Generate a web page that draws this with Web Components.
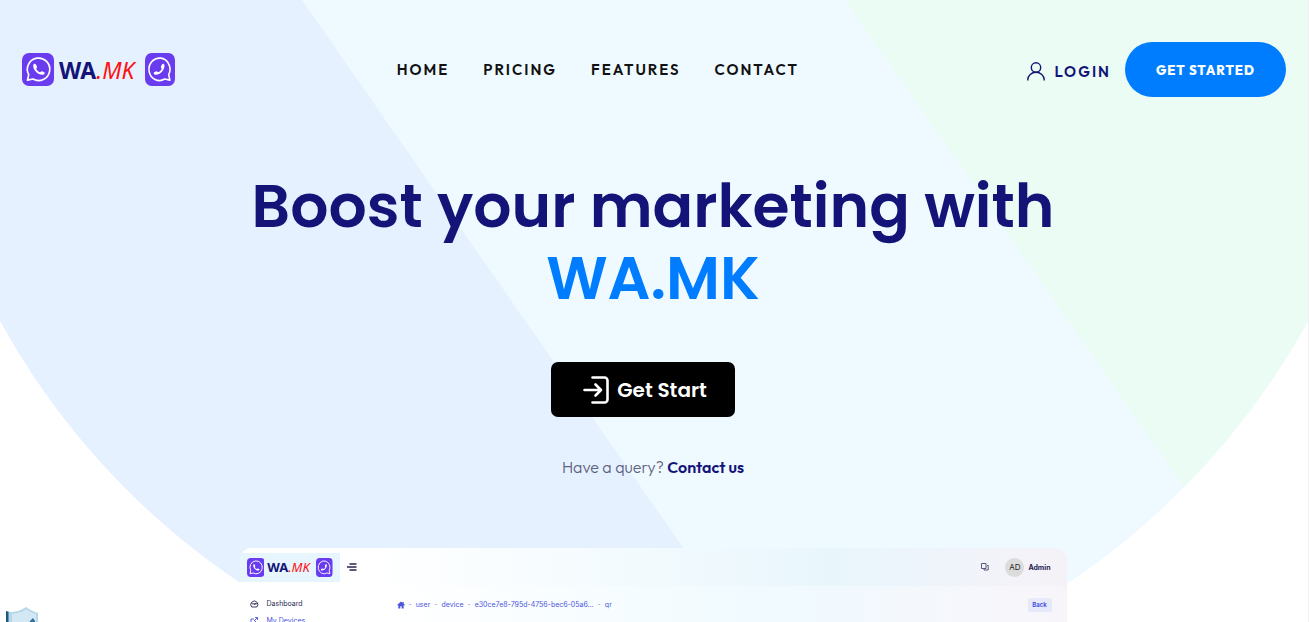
<!DOCTYPE html>
<html lang="en">
<head>
<meta charset="UTF-8">
<meta name="viewport" content="width=device-width, initial-scale=1.0">
<title>WA.MK</title>
<style>
  :root {
    --navy: #141478;
    --blue: #007dff;
    --heading: "Poppins", "Inter", "Liberation Sans", sans-serif;
    --text: "Outfit", "Lato", "Liberation Sans", sans-serif;
  }

  body {
    margin: 0;
    background: #fff;
    font-family: var(--text);
  }
</style>
</head>
<body>
<landing-hero>
  <site-header slot="header"></site-header>
  <hero-intro name="WA.MK">Boost your marketing with</hero-intro>
  <app-preview slot="preview"></app-preview>
</landing-hero>
<shield-badge></shield-badge>

<script>
class ChatIcon extends HTMLElement {
  constructor() {
    super();
    this.attachShadow({ mode: "open" });
  }

  connectedCallback() {
    this.shadowRoot.innerHTML = `
      <style>
        :host { display: block; width: 32px; height: 33px; }
        :host([flip]) { transform: scaleX(-1); }
        svg { display: block; width: 100%; height: 100%; }
      </style>
      <svg viewBox="0 0 32 33" preserveAspectRatio="none" fill="none">
        <rect width="32" height="33" rx="7" fill="#6a3cf0"/>
        <path d="M5.500 27.200L6.700 21.600A11.200 11.200 0 1 1 11 26z" stroke="#fff" stroke-width="1.700" stroke-linejoin="round"/>
        <path d="M11.200 12.300C11.400 10.500 13.200 10.200 13.900 11.400L15 13.600C15.300 14.500 14.200 15.200 14.300 15.900C15 17.400 16.400 18.600 17.900 19.200C18.600 19.200 19.200 18 20.100 18.300L22.300 19.300C23.200 20 22.500 21.400 21.300 21.700C16.500 22.500 10.900 17.400 11.200 12.300z" fill="#fff"/>
      </svg>
    `;
  }
}
customElements.define("chat-icon", ChatIcon);

class BrandLogo extends HTMLElement {
  constructor() {
    super();
    this.attachShadow({ mode: "open" });
  }

  connectedCallback() {
    this.shadowRoot.innerHTML = `
      <style>
        :host { display: block; }
        a {
          display: flex;
          align-items: center;
          gap: 5px;
          color: var(--navy);
          font: 700 23px/32px "Noto Sans", sans-serif;
          text-decoration: none;
        }
        i { color: #f11; font-weight: 400; }
        chat-icon:last-child { width: 30px; margin-left: 6px; }

        :host([small]) a { gap: 3px; font-size: 13px; line-height: 19px; }
        :host([small]) chat-icon { width: 19px; height: 19px; }
        :host([small]) chat-icon:last-child { width: 18px; margin-left: 3px; }
      </style>
      <a href="#" aria-label="WA.MK">
        <chat-icon></chat-icon>
        <span>WA<i>.MK</i></span>
        <chat-icon flip></chat-icon>
      </a>
    `;
  }
}
customElements.define("brand-logo", BrandLogo);

class SiteHeader extends HTMLElement {
  constructor() {
    super();
    this.attachShadow({ mode: "open" });
  }

  connectedCallback() {
    this.shadowRoot.innerHTML = `
      <style>
        :host {
          display: flex;
          align-items: center;
          padding: 42px 22px 0;
        }
        brand-logo { flex: 10 1 0; }
        a { text-decoration: none; }
        nav { display: flex; gap: 34px; }
        nav a {
          color: #111;
          font-size: 15px;
          font-weight: 600;
          line-height: 24px;
          letter-spacing: 2px;
        }
        .actions {
          display: flex;
          flex: 13 1 0;
          align-items: center;
          justify-content: flex-end;
          gap: 14px;
        }
        .login {
          display: flex;
          align-items: center;
          gap: 9px;
          padding-top: 4px;
          color: var(--navy);
          font-size: 15px;
          font-weight: 600;
          line-height: 24px;
          letter-spacing: 2px;
        }
        .start {
          box-sizing: border-box;
          width: 161px;
          height: 55px;
          border: 0;
          border-radius: 28px;
          background: var(--blue);
          color: #fff;
          font: 800 13px/20px var(--text);
          letter-spacing: 1px;
          cursor: pointer;
        }
      </style>
      <brand-logo></brand-logo>
      <nav>
        <a href="#">HOME</a>
        <a href="#pricing">PRICING</a>
        <a href="#features">FEATURES</a>
        <a href="#contact">CONTACT</a>
      </nav>
      <div class="actions">
        <a class="login" href="#login">
          <svg width="18" height="19" viewBox="0 0 18 19" fill="none" stroke="currentColor" stroke-width="1.400">
            <circle cx="9" cy="5.500" r="4.700"/>
            <path d="M.8 18.500v-.8a8.200 7.500 0 0 1 16.400 0v.8"/>
          </svg>
          LOGIN
        </a>
        <button class="start">GET STARTED</button>
      </div>
    `;
  }
}
customElements.define("site-header", SiteHeader);

class HeroIntro extends HTMLElement {
  constructor() {
    super();
    this.attachShadow({ mode: "open" });
  }

  connectedCallback() {
    this.shadowRoot.innerHTML = `
      <style>
        :host {
          display: flex;
          flex-direction: column;
          align-items: center;
          padding: 73px 26px 0 24px;
        }
        h1 {
          margin: 0;
          color: var(--navy);
          font: 600 60px/72px var(--heading);
          text-align: center;
        }
        h1 span { display: block; color: var(--blue); }
        button {
          display: flex;
          align-items: center;
          justify-content: center;
          gap: 8px;
          width: 184px;
          height: 55px;
          margin: 48px 20px 0 0;
          padding: 0 0 0 4px;
          border: 0;
          border-radius: 7px;
          background: #000;
          color: #fff;
          font: 600 20px/28px var(--heading);
          cursor: pointer;
        }
        p {
          margin: 37px 0 0;
          color: #5f6280;
          font-size: 16px;
          font-weight: 300;
          line-height: 26px;
        }
        p a { color: var(--navy); font-weight: 600; text-decoration: none; }
      </style>
      <h1><slot></slot><span>${this.getAttribute("name")}</span></h1>
      <button>
        <svg width="26" height="28" viewBox="0 0 26 28" fill="none" stroke="#fff" stroke-width="2.600" stroke-linecap="round" stroke-linejoin="round">
          <path d="M9.500 1.500H21.500a3 3 0 0 1 3 3V23.500a3 3 0 0 1-3 3H9.500M1.500 14H18M12.500 8.500L18 14l-5.500 5.500"/>
        </svg>
        Get Start
      </button>
      <p>Have a query? <a href="#contact">Contact us</a></p>
    `;
  }
}
customElements.define("hero-intro", HeroIntro);

class AppPreview extends HTMLElement {
  constructor() {
    super();
    this.attachShadow({ mode: "open" });
  }

  connectedCallback() {
    this.shadowRoot.innerHTML = `
      <style>
        :host {
          display: block;
          box-sizing: border-box;
          width: 827px;
          max-width: 100%;
          height: 420px;
          border-radius: 12px 12px 0 0;
          background: linear-gradient(90deg, #fff 18%, #f5fcff 48%, #f0faff 65%, #f6f7fc 90%, #f8f5f9);
          overflow: hidden;
          font-family: "Inter", sans-serif;
        }
        a { color: inherit; text-decoration: none; }
        header {
          display: flex;
          align-items: center;
          height: 38px;
          background: linear-gradient(90deg, #fff 15%, #f2fafe 50%, #e8f6fc 72%, #eef4fb 83%, #f3f3f9 93%, #f5f2f7);
        }
        brand-logo {
          align-self: flex-start;
          box-sizing: border-box;
          width: 100px;
          height: 29px;
          margin-top: 5px;
          padding: 5px 7px;
          background: #e7f5ff;
        }
        .menu { margin: 0 auto 0 7px; }
        .avatar {
          width: 19px;
          height: 19px;
          margin: 0 4px 0 16px;
          border-radius: 50%;
          background: #dcdcdc;
          color: #222;
          font-size: 8px;
          line-height: 19px;
          text-align: center;
        }
        b { margin-right: 16px; color: #1c1c50; font-size: 7px; }
        .body {
          display: grid;
          grid-template-columns: 157px 1fr auto;
          align-items: start;
          padding: 11px 15px 0 0;
          color: #4b55dc;
          font-size: 7px;
        }
        aside { display: grid; gap: 3px; padding-left: 10px; }
        aside a { display: flex; align-items: center; gap: 8px; line-height: 14px; }
        aside a:first-child { color: #292950; }
        .crumbs { display: flex; align-items: center; gap: 4px; line-height: 16px; }
        .crumbs i { color: #8f95c8; font-style: normal; }
        button {
          width: 24px;
          height: 14px;
          margin-top: 1px;
          padding: 0;
          border: 0;
          border-radius: 2px;
          background: #e5e9fa;
          color: #3540dc;
          font: 600 6px/14px "Inter", sans-serif;
        }
      </style>
      <header>
        <brand-logo small></brand-logo>
        <svg class="menu" width="10" height="8" viewBox="0 0 10 8" stroke="#242450" stroke-width="1.300">
          <path d="M2.500 1H9.500M0 4H9.500M2.500 7H9.500"/>
        </svg>
        <svg width="8" height="8" viewBox="0 0 8 8" fill="none" stroke="#34345e" stroke-width=".8">
          <path d="M.5.500h4.500v5H.5zM6 2.500h1.200V7H3v-1"/>
        </svg>
        <span class="avatar">AD</span>
        <b>Admin</b>
      </header>
      <div class="body">
        <aside>
          <a href="#dashboard">
            <svg width="9" height="8" viewBox="0 0 9 8" fill="none" stroke="currentColor" stroke-width=".9">
              <path d="M1.800 7a3.500 3.500 0 1 1 5 0zM1.500 3.800h6M4.300 5l1.500-2"/>
            </svg>
            Dashboard
          </a>
          <a href="#devices">
            <svg width="9" height="8" viewBox="0 0 9 8" fill="none" stroke="currentColor" stroke-width=".9">
              <path d="M4 2H1v5.500h4.500V4M5 .5h2.500V3M4 4l3.500-3.500"/>
            </svg>
            My Devices
          </a>
        </aside>
        <div class="crumbs">
          <svg width="8" height="8" viewBox="0 0 9 8" fill="currentColor">
            <path d="M4.500 0L0 4l.6.600L1.500 4v4h2.200V5.500h1.600V8h2.200V4l.9.600.6-.6L7.500 2.600V.5h-1.200v1z"/>
          </svg>
          <i>-</i><a href="#user">user</a>
          <i>-</i><a href="#device">device</a>
          <i>-</i><a href="#id">e30ce7e8-795d-4756-bec6-05a6...</a>
          <i>-</i><span>qr</span>
        </div>
        <button>Back</button>
      </div>
    `;
  }
}
customElements.define("app-preview", AppPreview);

class ShieldBadge extends HTMLElement {
  constructor() {
    super();
    this.attachShadow({ mode: "open" });
  }

  connectedCallback() {
    this.shadowRoot.innerHTML = `
      <style>
        :host { position: fixed; left: 6px; bottom: -23px; }
        svg { display: block; }
      </style>
      <svg width="34" height="38" viewBox="0 0 34 38">
        <path d="M0 4l3.500 1v28L0 27z" fill="#1c5a78"/>
        <path d="M2.500 5c7 0 12-1 17.500-5 4 3 8 5 12 6v10c0 10-5 17-14 22C8 33 2.500 26 2.500 16z" fill="#b4d8ea"/>
        <path d="M6 6.500c6 0 10-1 14-4.500 3 2.500 6 4 10 5v8c0 8-5 15-12 19C10 30 6 24 6 16z" fill="#d3e8f4"/>
        <path d="M24 14l3-3 2 3v4l-8 6z" fill="#2f6f98"/>
      </svg>
    `;
  }
}
customElements.define("shield-badge", ShieldBadge);

class LandingHero extends HTMLElement {
  constructor() {
    super();
    this.attachShadow({ mode: "open" });
  }

  connectedCallback() {
    this.shadowRoot.innerHTML = `
      <style>
        :host {
          display: block;
          position: relative;
          box-sizing: border-box;
          height: 100vh;
          overflow: hidden;
          border-right: 1px solid #eef0f2;
        }
        .backdrop {
          position: absolute;
          top: 0;
          left: 0;
          z-index: -1;
          width: 100%;
        }
        .preview {
          display: flex;
          justify-content: center;
          margin-top: 68px;
          padding-right: 2px;
        }
      </style>
      <svg class="backdrop" viewBox="0 0 1308 710" aria-hidden="true">
        <clipPath id="bowl"><circle cx="654" cy="-38" r="746"/></clipPath>
        <g clip-path="url(#bowl)">
          <path d="M0 0H1308V710H0z" fill="#e5f1ff"/>
          <path d="M302 0H1308V710H796z" fill="#eefaff"/>
          <path d="M845 0H1308V666z" fill="#eafcf4"/>
        </g>
      </svg>
      <slot name="header"></slot>
      <slot></slot>
      <div class="preview"><slot name="preview"></slot></div>
    `;
  }
}
customElements.define("landing-hero", LandingHero);
</script>
</body>
</html>
